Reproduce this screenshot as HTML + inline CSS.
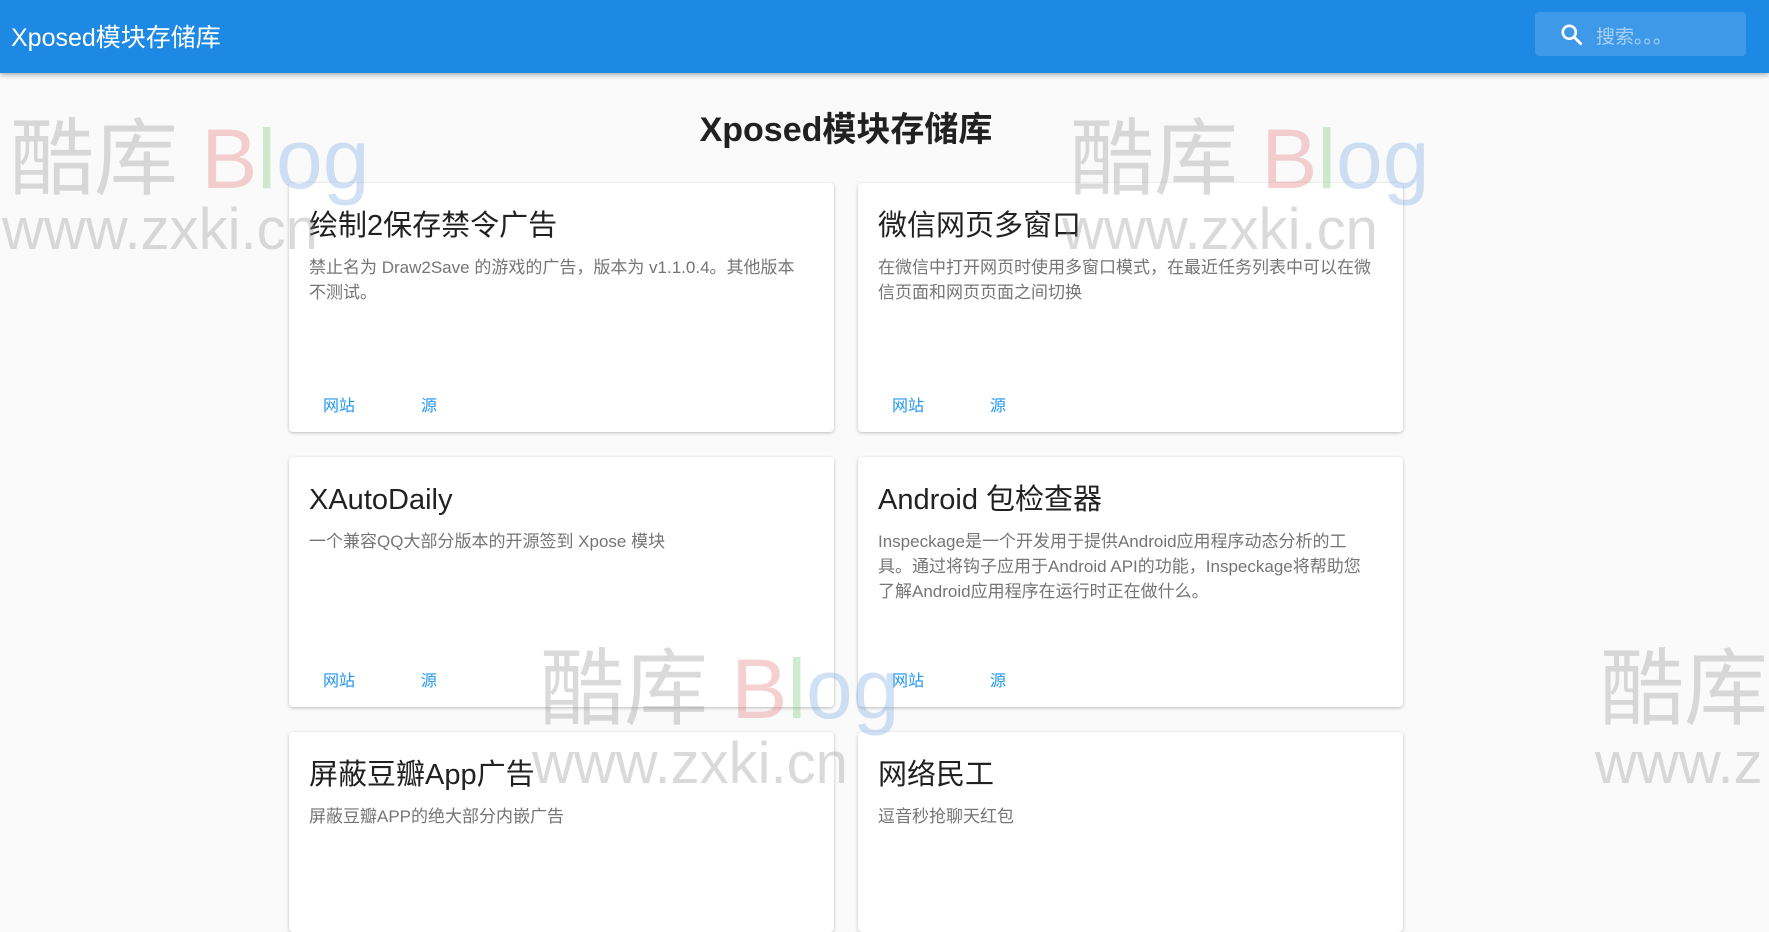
<!DOCTYPE html>
<html><head><meta charset="utf-8"><style>
*{box-sizing:border-box;margin:0;padding:0}
body{width:1769px;height:867px;overflow:hidden;background:#fafafa;font-family:"Liberation Sans","Noto Sans CJK SC",sans-serif;position:relative}
.hdr{position:absolute;left:0;top:0;width:1769px;height:73px;background:#1e88e5;box-shadow:0 2px 5px rgba(0,0,0,.3);z-index:3}
.hdr .t{position:absolute;left:11px;top:18px;color:#fff;font-size:25px}
.sb{position:absolute;left:1535px;top:12px;width:211px;height:44px;background:rgba(255,255,255,.15);border-radius:4px}
.sb svg{position:absolute;left:24px;top:10px}
.sb span{position:absolute;left:61px;top:10px;color:rgba(255,255,255,.55);font-size:19px}
h1{position:absolute;left:0;width:1692px;text-align:center;top:102px;font-size:34px;font-weight:bold;color:#212121}
.c{position:absolute;width:545px;background:#fff;border-radius:4px;box-shadow:0 1px 3px rgba(0,0,0,.25);z-index:2}
.c h2{position:absolute;left:20px;top:25px;font-size:29px;line-height:36px;height:36px;font-weight:normal;color:#212121}
.c p{position:absolute;left:20px;top:72px;right:26px;font-size:17px;line-height:25px;color:#757575}
.c a{position:absolute;top:209px;font-size:16px;color:#2196f3;text-decoration:none}
.w{position:absolute;color:rgba(150,150,150,.35);z-index:4;pointer-events:none;white-space:nowrap}
.w1{font-size:84px}.w2{font-size:58px}
</style></head><body>
<div class="hdr"><div class="t">Xposed模块存储库</div>
<div class="sb"><svg width="26" height="26" viewBox="0 0 24 24"><circle cx="9.5" cy="9.5" r="6" fill="none" stroke="#fff" stroke-width="2.4"/><path d="M14 14l6 6" stroke="#fff" stroke-width="2.6" stroke-linecap="round"/></svg><span>搜索。。。</span></div></div>
<h1>Xposed模块存储库</h1>

<div class="c" style="left:289px;top:183px;height:249px"><h2>绘制2保存禁令广告</h2><p>禁止名为 Draw2Save 的游戏的广告，版本为 v1.1.0.4。其他版本不测试。</p><a style="left:34px">网站</a><a style="left:132px">源</a></div>
<div class="c" style="left:858px;top:183px;height:249px"><h2>微信网页多窗口</h2><p>在微信中打开网页时使用多窗口模式，在最近任务列表中可以在微信页面和网页页面之间切换</p><a style="left:34px">网站</a><a style="left:132px">源</a></div>
<div class="c" style="left:289px;top:457px;height:250px"><h2>XAutoDaily</h2><p>一个兼容QQ大部分版本的开源签到 Xpose 模块</p><a style="left:34px;top:210px">网站</a><a style="left:132px;top:210px">源</a></div>
<div class="c" style="left:858px;top:457px;height:250px"><h2>Android 包检查器</h2><p>Inspeckage是一个开发用于提供Android应用程序动态分析的工具。通过将钩子应用于Android API的功能，Inspeckage将帮助您了解Android应用程序在运行时正在做什么。</p><a style="left:34px;top:210px">网站</a><a style="left:132px;top:210px">源</a></div>
<div class="c" style="left:289px;top:732px;height:200px"><h2>屏蔽豆瓣App广告</h2><p>屏蔽豆瓣APP的绝大部分内嵌广告</p></div>
<div class="c" style="left:858px;top:732px;height:200px"><h2>网络民工</h2><p>逗音秒抢聊天红包</p></div>

<div class="w w1" style="left:10px;top:92px">酷库 <span style="color:rgba(230,120,120,.35)">B</span><span style="color:rgba(120,200,120,.35)">l</span><span style="color:rgba(120,170,230,.35)">og</span></div>
<div class="w w2" style="left:2px;top:196px">www.zxki.cn</div>
<div class="w w1" style="left:1070px;top:92px">酷库 <span style="color:rgba(230,120,120,.35)">B</span><span style="color:rgba(120,200,120,.35)">l</span><span style="color:rgba(120,170,230,.35)">og</span></div>
<div class="w w2" style="left:1062px;top:196px">www.zxki.cn</div>
<div class="w w1" style="left:540px;top:622px">酷库 <span style="color:rgba(230,120,120,.35)">B</span><span style="color:rgba(120,200,120,.35)">l</span><span style="color:rgba(120,170,230,.35)">og</span></div>
<div class="w w2" style="left:532px;top:730px">www.zxki.cn</div>
<div class="w w1" style="left:1600px;top:622px">酷库</div>
<div class="w w2" style="left:1595px;top:730px">www.z</div>
</body></html>
